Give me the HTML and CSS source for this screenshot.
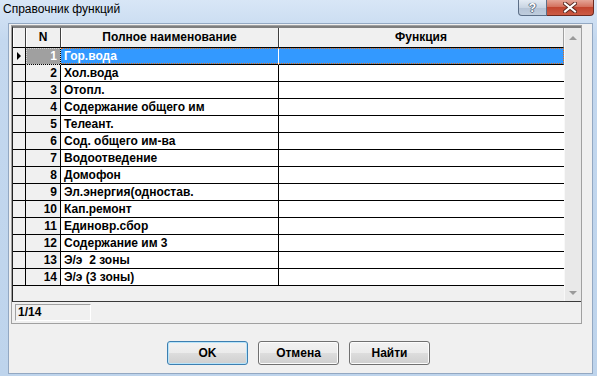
FILE: index.html
```html
<!DOCTYPE html>
<html lang="ru">
<head>
    <meta charset="UTF-8">
    <meta name="viewport" content="width=device-width, initial-scale=1.0">
    <link rel="stylesheet" href="styles.css">
    <title>Справочник функций</title>
</head>
<body>
    <div class="window">
        <div class="titlebar">
            <span class="caption">Справочник функций</span>
            <div class="caption-buttons">
                <span class="btn-help">?</span>
                <span class="btn-close">
                    <svg width="14" height="11" viewBox="0 0 14 11">
                        <path d="M2 1.5 L12 9.5 M12 1.5 L2 9.5" stroke="#5a2a22" stroke-width="4" stroke-linecap="square"/>
                        <path d="M2 1.5 L12 9.5 M12 1.5 L2 9.5" stroke="#fff" stroke-width="2" stroke-linecap="square"/>
                    </svg>
                </span>
            </div>
        </div>
        <div class="client">
            <div class="panel">
                <div class="grid">
                    <div class="table">
                        <div class="row head">
                            <div class="cell ind"></div>
                            <div class="cell num">N</div>
                            <div class="cell name">Полное наименование</div>
                            <div class="cell func">Функция</div>
                        </div>
                        <div class="row current">
                            <div class="cell ind"><span class="marker"></span></div>
                            <div class="cell num">1</div>
                            <div class="cell name">Гор.вода</div>
                            <div class="cell func"></div>
                        </div>
                        <div class="row"><div class="cell ind"></div><div class="cell num">2</div><div class="cell name">Хол.вода</div><div class="cell func"></div></div>
                        <div class="row"><div class="cell ind"></div><div class="cell num">3</div><div class="cell name">Отопл.</div><div class="cell func"></div></div>
                        <div class="row"><div class="cell ind"></div><div class="cell num">4</div><div class="cell name">Содержание общего им</div><div class="cell func"></div></div>
                        <div class="row"><div class="cell ind"></div><div class="cell num">5</div><div class="cell name">Телеант.</div><div class="cell func"></div></div>
                        <div class="row"><div class="cell ind"></div><div class="cell num">6</div><div class="cell name">Сод. общего им-ва</div><div class="cell func"></div></div>
                        <div class="row"><div class="cell ind"></div><div class="cell num">7</div><div class="cell name">Водоотведение</div><div class="cell func"></div></div>
                        <div class="row"><div class="cell ind"></div><div class="cell num">8</div><div class="cell name">Домофон</div><div class="cell func"></div></div>
                        <div class="row"><div class="cell ind"></div><div class="cell num">9</div><div class="cell name">Эл.энергия(одностав.</div><div class="cell func"></div></div>
                        <div class="row"><div class="cell ind"></div><div class="cell num">10</div><div class="cell name">Кап.ремонт</div><div class="cell func"></div></div>
                        <div class="row"><div class="cell ind"></div><div class="cell num">11</div><div class="cell name">Единовр.сбор</div><div class="cell func"></div></div>
                        <div class="row"><div class="cell ind"></div><div class="cell num">12</div><div class="cell name">Содержание им 3</div><div class="cell func"></div></div>
                        <div class="row"><div class="cell ind"></div><div class="cell num">13</div><div class="cell name">Э/э  2 зоны</div><div class="cell func"></div></div>
                        <div class="row"><div class="cell ind"></div><div class="cell num">14</div><div class="cell name">Э/э (3 зоны)</div><div class="cell func"></div></div>
                    </div>
                    <div class="scrollbar">
                        <span class="arrow up"></span>
                        <span class="arrow down"></span>
                    </div>
                </div>
                <div class="status">
                    <span class="counter">1/14</span>
                </div>
            </div>
            <div class="actions">
                <button class="default">OK</button>
                <button>Отмена</button>
                <button>Найти</button>
            </div>
        </div>
    </div>
</body>
</html>
```

FILE: styles.css
```css
* {
    margin: 0;
    padding: 0;
    box-sizing: border-box;
}
body {
    width: 597px;
    height: 376px;
    overflow: hidden;
    font-family: "Liberation Sans", Arial, sans-serif;
    font-size: 12px;
    color: #000;
}
.window {
    height: 376px;
    padding: 0 4px 2px 8px;
    background: linear-gradient(#d8e6f6, #c4d8ef 40px, #bed4ec);
    display: flex;
    flex-direction: column;
}

/* title bar */
.titlebar {
    height: 23px;
    margin-left: -8px;
    margin-right: -1px;
    display: flex;
    justify-content: space-between;
    align-items: flex-start;
}
.caption {
    padding: 1px 0 0 3px;
    line-height: 16px;
    font-family: "Liberation Sans", sans-serif;
    font-size: 12px;
}
.caption-buttons {
    display: flex;
}
.btn-help, .btn-close {
    height: 16px;
    display: flex;
    align-items: center;
    justify-content: center;
}
.btn-help {
    width: 29px;
    border: 1px solid #5d6f87;
    border-top: none;
    border-radius: 0 0 0 4px;
    background: linear-gradient(#e3ebf4, #c9d5e3 50%, #b4c3d6 51%, #bfcddd);
    font-weight: bold;
    font-size: 12px;
    color: #fff;
    text-shadow: 0 0 1px #4b5a6d, 1px 0 0 #6a7a90, -1px 0 0 #6a7a90, 0 1px 0 #6a7a90;
}
.btn-close {
    width: 47px;
    border: 1px solid #6e2a20;
    border-top: none;
    border-left: none;
    border-radius: 0 0 4px 0;
    background: linear-gradient(#e5a597, #d4725f 45%, #c2452f 50%, #cc5c45);
}

/* client area */
.client {
    flex: 1;
    border: 1px solid #93a8c2;
    background: #f0f0f0;
    display: flex;
    flex-direction: column;
}
.panel {
    margin: 1px 10px 0 2px;
    border: 1px solid #a0a0a0;
}
.grid {
    height: 276px;
    display: flex;
    border-top: 2px solid #7e7e7e;
    border-left: 1px solid #222;
    border-bottom: 1px solid #3a3a3a;
}
.table {
    width: 551px;
}
.row {
    display: grid;
    grid-template-columns: 13px 35px 218px 285px;
    height: 17px;
}
.cell {
    border-right: 1px solid #000;
    border-bottom: 1px solid #000;
    font-weight: bold;
    line-height: 16px;
    white-space: pre;
    overflow: hidden;
}
.cell.ind, .cell.num {
    background: #f0f0f0;
}
.cell.num {
    text-align: right;
    padding-right: 3px;
}
.cell.name {
    background: #fff;
    padding-left: 3px;
}
.cell.func {
    background: #fff;
    border-right: none;
}
.row.head {
    height: 20px;
}
.row.head .cell {
    background: #f0f0f0;
    text-align: center;
    line-height: 19px;
    padding: 0;
    border-right-color: #404040;
    box-shadow: inset 1px 0 0 #fff;
}
.row.head .cell.func {
    border-right: 1px solid #a0a0a0;
}
.row.current .cell.num {
    background: #a0a0a0;
    color: #fff;
    outline: 1px dotted #d8d8d8;
    outline-offset: -1px;
}
.row.current .cell.name,
.row.current .cell.func {
    background: repeating-linear-gradient(90deg, #e0701c 0 1px, transparent 1px 2px) bottom / 100% 1px no-repeat, #3399ff;
    color: #fff;
    border-top: 1px dotted #e0701c;
    line-height: 14px;
}
.row.current .cell.name {
    border-right-color: #fff;
}
.row.current .cell.func {
    border-right: 1px dotted #e0701c;
}
.ind {
    display: flex;
    align-items: center;
    padding-left: 4px;
}
.marker {
    width: 0;
    height: 0;
    border-top: 4px solid transparent;
    border-bottom: 4px solid transparent;
    border-left: 4px solid #000;
}

/* scroll bar */
.scrollbar {
    width: 17px;
    border-left: 1px solid #f8f8f8;
    background: #e9e9e9;
    display: flex;
    flex-direction: column;
    justify-content: space-between;
    align-items: center;
    padding: 8px 0 6px;
}
.arrow {
    width: 0;
    height: 0;
    border-left: 4px solid transparent;
    border-right: 4px solid transparent;
}
.arrow.up {
    border-bottom: 4px solid #9a9a9a;
}
.arrow.down {
    border-top: 4px solid #9a9a9a;
}

/* status */
.status {
    height: 21px;
    padding: 2px 0 0 3px;
}
.counter {
    display: block;
    width: 76px;
    height: 17px;
    padding-left: 2px;
    border: 1px solid;
    border-color: #a0a0a0 #fff #fff #a0a0a0;
    font-weight: bold;
    line-height: 15px;
}

/* buttons */
.actions {
    display: flex;
    justify-content: center;
    gap: 10px;
    margin-top: 17px;
    padding-right: 4px;
}
.actions button {
    width: 81px;
    height: 24px;
    border: 1px solid #707070;
    border-radius: 3px;
    background: linear-gradient(#f2f2f2, #ebebeb 50%, #dddddd 51%, #cfcfcf);
    box-shadow: inset 0 0 0 1px #fcfcfc;
    font-family: "Liberation Sans", Arial, sans-serif;
    font-size: 12px;
    font-weight: bold;
    color: #000;
}
.actions button.default {
    border-color: #3c7fb1;
    box-shadow: inset 0 0 0 1px #b8e4fa;
}
```
